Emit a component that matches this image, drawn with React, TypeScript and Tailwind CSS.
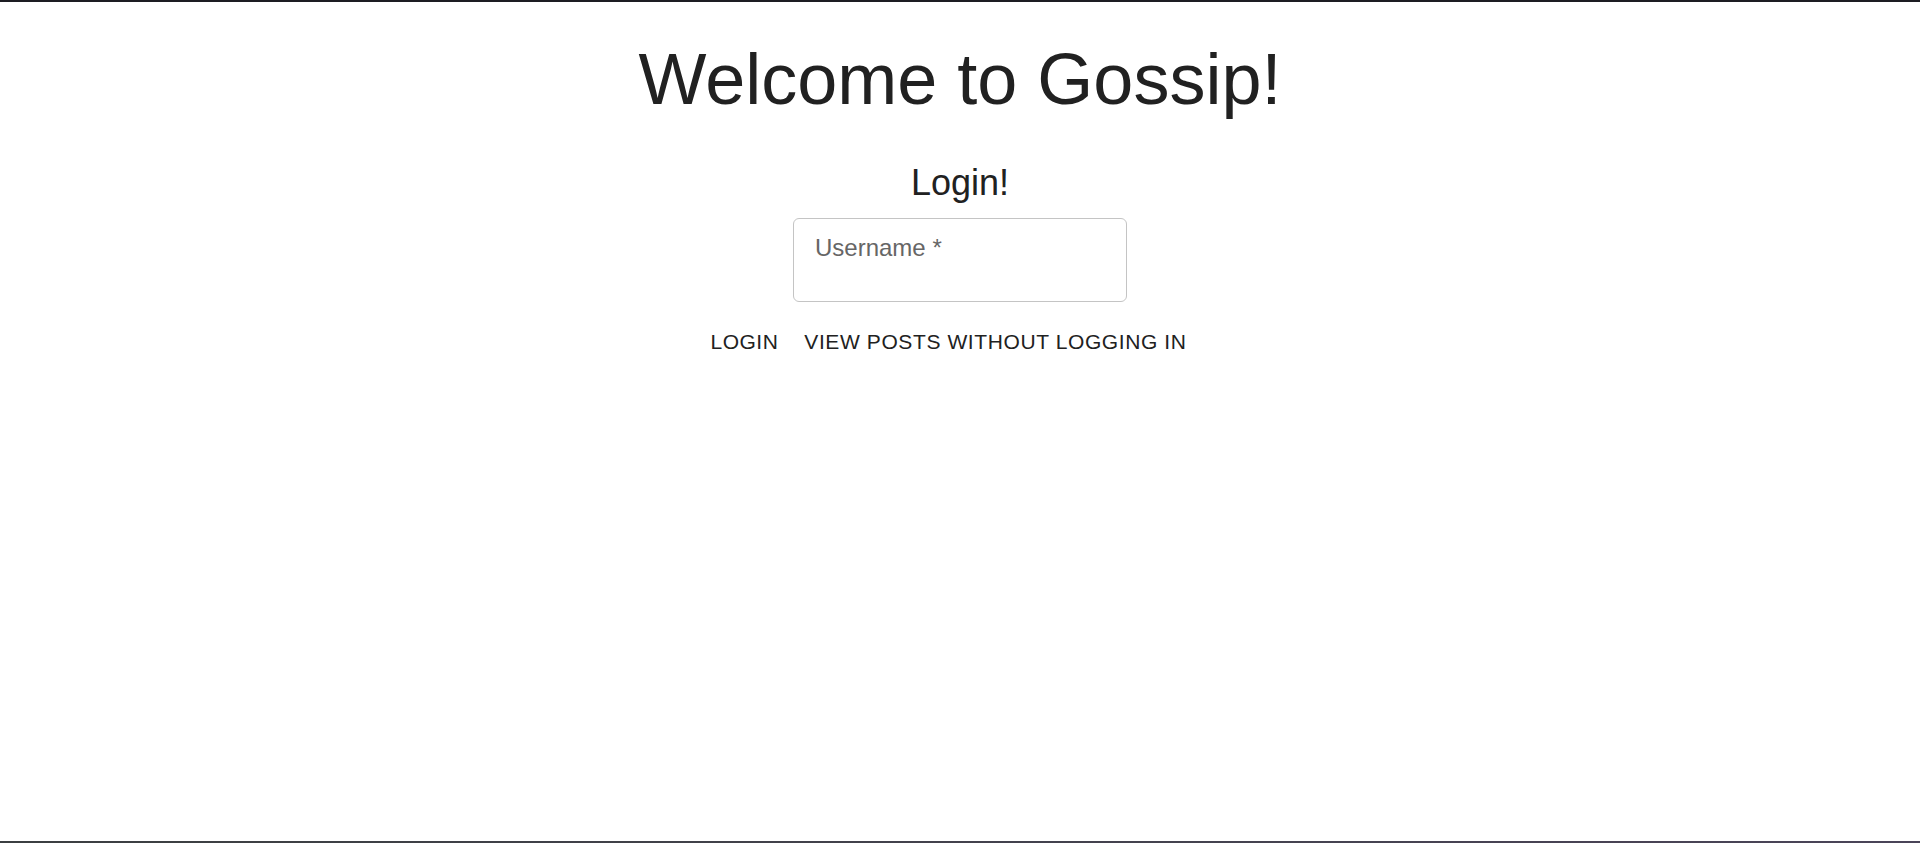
import React from "react";

export default function App() {
  return (
    <div
      className="flex h-[843px] w-full flex-col bg-white text-[#212121]"
      style={{ fontFamily: '"Liberation Sans", Arial, sans-serif' }}
    >
      <div className="h-[2px] w-full bg-[#1d1d23]" />
      <main className="flex flex-1 flex-col items-center">
        <h1 className="mt-[35px] text-[72px] font-normal leading-[84px]">
          Welcome to Gossip!
        </h1>
        <h2 className="mt-[38px] text-[36px] font-normal leading-[48px]">
          Login!
        </h2>
        <div className="mt-[11px] h-[84px] w-[334px] rounded-[6px] border border-[#c4c4c4] pl-[21px] pt-[17px]">
          <label className="block text-[24px] leading-[24px] text-[#666666]">
            Username *
          </label>
        </div>
        <div className="mt-[13px] flex pr-[23px]">
          <button className="px-[12px] py-[9px] text-[21px] uppercase leading-[36.75px] tracking-[0.5px] text-[#212121]">
            Login
          </button>
          <button className="ml-[2px] px-[12px] py-[9px] text-[21px] uppercase leading-[36.75px] tracking-[0.6px] text-[#212121]">
            View posts without logging in
          </button>
        </div>
      </main>
      <div className="h-[2px] w-full bg-gradient-to-r from-[#3b3f41] to-[#4a4458]" />
    </div>
  );
}
